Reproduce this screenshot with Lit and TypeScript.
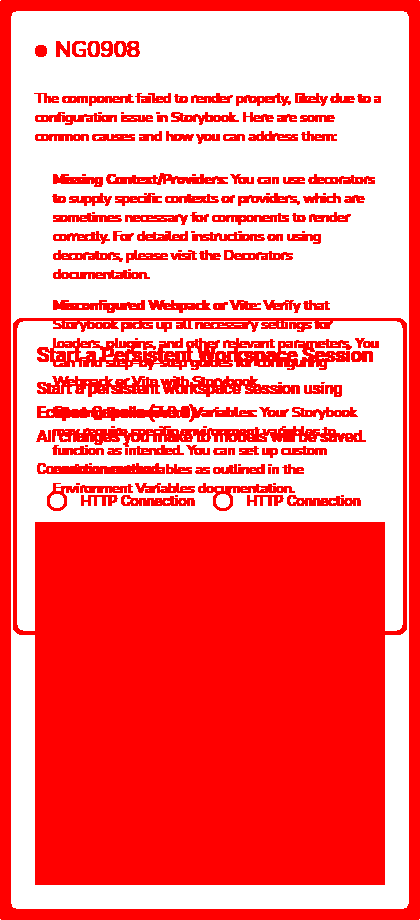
import { LitElement, html, css } from "lit";
import { customElement } from "lit/decorators.js";

@customElement("app-root")
export class AppRoot extends LitElement {
  static styles = css`
    :host {
      display: block;
      position: relative;
      width: 420px;
      height: 920px;
      overflow: hidden;
      background: #fff;
      color: #f00;
    }
    * { box-sizing: border-box; }
    .defs { position: absolute; width: 0; height: 0; }
    .solid { width: 420px; height: 920px; filter: url(#solid); text-shadow: 0.5px 0 #f00, -0.5px 0 #f00; }
    .error {
      width: 420px;
      height: 920px;
      border: 11px solid #f00;
      border-radius: 4px;
      padding: 24px 24px;
      font: 14px/19px "Nunito Sans", "Open Sans", sans-serif;
      white-space: nowrap;
      position: relative;
    }
    .corner { position: absolute; inset: -5px; border: 5px solid #f00; border-radius: 10px; }
    h1 {
      display: flex;
      align-items: center;
      gap: 8px;
      margin: 0;
      height: 30px;
      font-size: 22px;
      line-height: 30px;
      font-weight: 400;
    }
    .dot { width: 12px; height: 12px; margin-top: 2px; border-radius: 50%; background: #f00; }
    p { margin: 0; }
    .intro { margin-top: 24px; }
    ul { list-style: none; margin: 24px 0 0; padding: 0 0 0 18px; display: grid; gap: 12px; }
    .code { margin-top: 24px; height: 363px; border-radius: 1px; background: #f00; }
    .dialog {
      position: absolute;
      left: 13px;
      top: 318px;
      width: 394px;
      height: 317px;
      border: 4px solid #f00;
      border-top-width: 3px;
      border-radius: 10px;
      padding: 22px 20px;
      font: 16px/24px Roboto, sans-serif;
      white-space: nowrap;
    }
    h2 { margin: 0 0 9px; font: 500 20px/25px Roboto, sans-serif; }
    .method { margin-top: 10px; font-size: 14px; line-height: 20px; }
    .radios { display: flex; gap: 18px; margin: 12px 0 0 10px; font-size: 14px; line-height: 20px; letter-spacing: 0.25px; }
    .radio { display: flex; align-items: center; gap: 14px; width: 148px; }
    .ring { flex: none; width: 20px; height: 20px; border: 2px solid #f00; border-radius: 50%; }
  `;

  render() {
    return html`
      <svg class="defs">
        <filter id="solid" x="0" y="0" width="1" height="1" color-interpolation-filters="sRGB">
          <feComponentTransfer><feFuncA type="linear" slope="255" intercept="0" /></feComponentTransfer>
        </filter>
      </svg>
      <div class="solid">
        <div class="error">
          <div class="corner"></div>
          <h1><span class="dot"></span>NG0908</h1>
          <p class="intro">
            The component failed to render properly, likely due to a<br />configuration
            issue in Storybook. Here are some<br />common causes and how you can address them:
          </p>
          <ul>
            <li>
              <b>Missing Context/Providers:</b> You can use decorators<br />to supply specific contexts or
              providers, which are<br />sometimes necessary for components to render<br />correctly. For detailed
              instructions on using<br />decorators, please visit the Decorators<br />documentation.
            </li>
            <li>
              <b>Misconfigured Webpack or Vite:</b> Verify that<br />Storybook picks up all necessary settings
              for<br />loaders, plugins, and other relevant parameters. You<br />can find step-by-step guides for
              configuring<br />Webpack or Vite with Storybook.
            </li>
            <li>
              <b>Missing Environment Variables:</b> Your Storybook<br />may require specific environment variables
              to<br />function as intended. You can set up custom<br />environment variables as outlined in
              the<br />Environment Variables documentation.
            </li>
          </ul>
          <div class="code"></div>
        </div>
        <div class="dialog">
          <h2>Start a Persistent Workspace Session</h2>
          <p>Start a persistent workspace session using<br />Eclipse Capella (7.0.0).<br />All changes you make to models will be saved.</p>
          <p class="method">Connection method</p>
          <div class="radios">
            <div class="radio"><span class="ring"></span>HTTP Connection</div>
            <div class="radio"><span class="ring"></span>HTTP Connection</div>
          </div>
        </div>
      </div>
    `;
  }
}
